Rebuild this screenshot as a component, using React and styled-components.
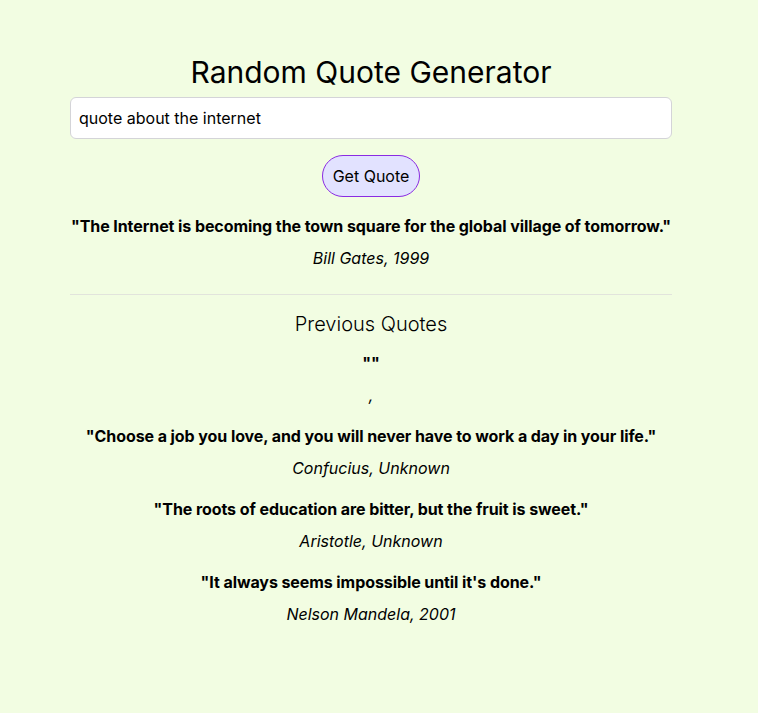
import React from "react";
import styled, { createGlobalStyle } from "styled-components";

const Global = createGlobalStyle`
  html, body { margin: 0; padding: 0; background: #f2fde2; }
  body { font-family: Inter, "Noto Sans", sans-serif; color: #000; }
`;

const Page = styled.div`
  min-height: 713px;
  padding: 0 16px 0 0;
  box-sizing: border-box;
`;

const Container = styled.main`
  width: 602px;
  margin: 0 auto;
  padding-top: 54px;
  display: flex;
  flex-direction: column;
  align-items: center;
`;

const Title = styled.h1`
  margin: 0 0 7px;
  font-size: 30px;
  line-height: 36px;
  font-weight: 400;
`;

const Input = styled.input`
  box-sizing: border-box;
  width: 100%;
  height: 42px;
  padding: 0 8px;
  border: 1px solid #d4d4d8;
  border-radius: 6px;
  background: #fff;
  font-family: inherit;
  font-size: 16px;
  color: #000;
  outline: none;
`;

const Button = styled.button`
  margin-top: 16px;
  height: 42px;
  padding: 0 10px;
  border: 1px solid #8a2be2;
  border-radius: 21px;
  background: #e2e2ff;
  font-family: inherit;
  font-size: 16px;
  color: #000;
  cursor: pointer;
`;

const QuoteBlock = styled.div`
  display: flex;
  flex-direction: column;
  align-items: center;
  gap: 12px;
  margin-top: ${(p) => p.$top}px;
`;

const QuoteText = styled.p`
  margin: 0;
  font-size: 16px;
  line-height: 20px;
  font-weight: 700;
  letter-spacing: -0.08px;
  white-space: nowrap;
  text-align: center;
`;

const Author = styled.p`
  margin: 0;
  font-size: 16px;
  line-height: 20px;
  font-style: italic;
  text-align: center;
`;

const Divider = styled.hr`
  width: 100%;
  margin: 26px 0 0;
  border: none;
  border-top: 1px solid #e2e4dc;
`;

const Subtitle = styled.h2`
  margin: 17px 0 0;
  font-size: 20px;
  line-height: 24px;
  font-weight: 300;
`;

const Quote = ({ text, author, top }) => (
  <QuoteBlock $top={top}>
    <QuoteText>"{text}"</QuoteText>
    <Author>{author}</Author>
  </QuoteBlock>
);

const previous = [
  { text: "", author: "," },
  { text: "Choose a job you love, and you will never have to work a day in your life.", author: "Confucius, Unknown" },
  { text: "The roots of education are bitter, but the fruit is sweet.", author: "Aristotle, Unknown" },
  { text: "It always seems impossible until it's done.", author: "Nelson Mandela, 2001" },
];

export default function App() {
  return (
    <Page>
      <Global />
      <Container>
        <Title>Random Quote Generator</Title>
        <Input defaultValue="quote about the internet" />
        <Button>Get Quote</Button>
        <Quote
          top={19}
          text="The Internet is becoming the town square for the global village of tomorrow."
          author="Bill Gates, 1999"
        />
        <Divider />
        <Subtitle>Previous Quotes</Subtitle>
        {previous.map((q, i) => (
          <Quote key={i} top={i === 0 ? 17 : 21} text={q.text} author={q.author} />
        ))}
      </Container>
    </Page>
  );
}
